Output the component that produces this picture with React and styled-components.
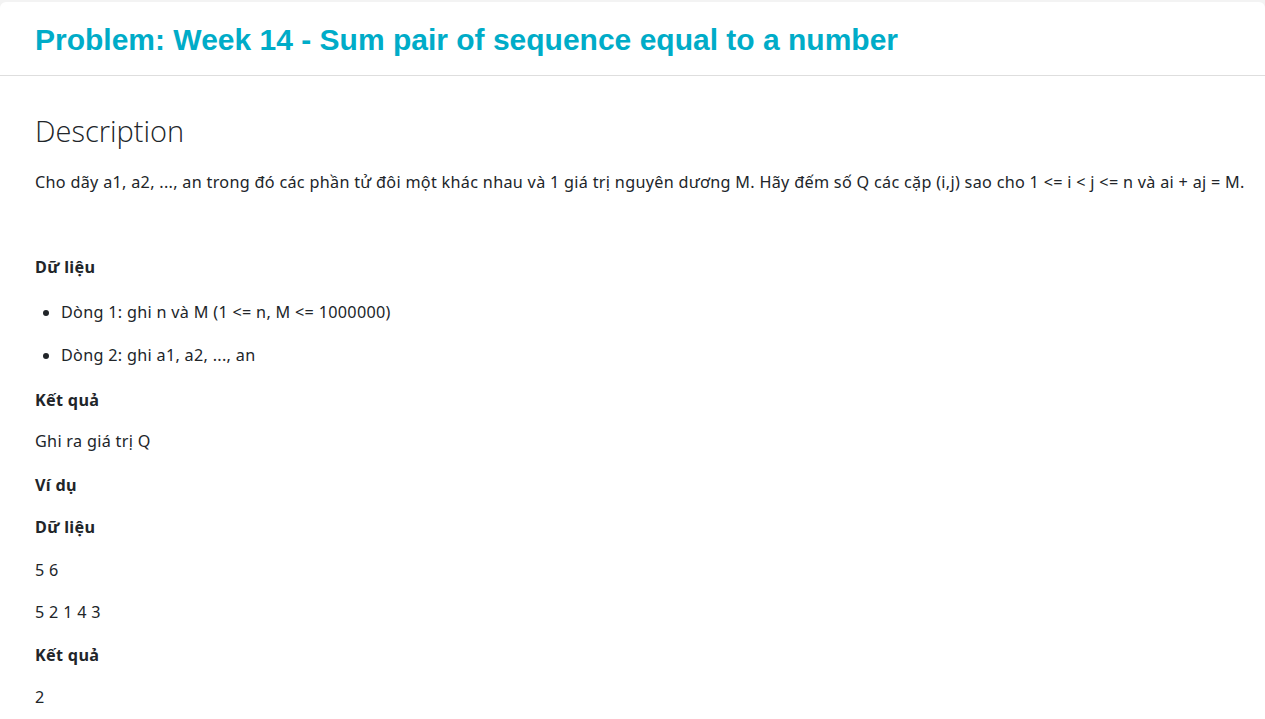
import React from "react";
import styled, { createGlobalStyle } from "styled-components";

const GlobalStyle = createGlobalStyle`
  html, body {
    margin: 0;
    padding: 0;
    background: #ffffff;
  }
  body {
    font-family: "Noto Sans", "Open Sans", sans-serif;
    color: #212529;
  }
`;

const Page = styled.div`
  background: #f3f3f3;
  padding-top: 2px;
  min-height: 100vh;
  box-sizing: border-box;
`;

const Card = styled.div`
  background: #fff;
  border-radius: 6px 6px 0 0;
  min-height: calc(100vh - 2px);
`;

const Header = styled.header`
  display: flex;
  align-items: center;
  height: 74px;
  padding: 2px 35px 0;
  box-sizing: border-box;
  border-bottom: 1px solid #dedede;
`;

const Title = styled.h1`
  margin: 0;
  font-family: "Liberation Sans", Arial, sans-serif;
  font-weight: bold;
  font-size: 30px;
  color: #00acc8;
`;

const Body = styled.main`
  padding: 37px 8px 0 35px;
`;

const Heading = styled.h2`
  margin: 0 0 20px;
  font-family: "Open Sans", "Noto Sans", sans-serif;
  font-weight: 300;
  font-size: 29px;
  line-height: 36px;
`;

const Para = styled.p`
  margin: 0 0 ${(p) => p.$gap || 16}px;
  font-size: 16.2px;
  letter-spacing: 0.3px;
  line-height: 26px;
  font-weight: ${(p) => (p.$bold ? 700 : 400)};
  color: #212529;
`;

const List = styled.ul`
  margin: 0 0 19px;
  padding-left: 26px;
`;

const Item = styled.li`
  font-size: 16.2px;
  letter-spacing: 0.3px;
  line-height: 26px;
  margin-bottom: 17px;
`;

export default function App() {
  return (
    <Page>
      <GlobalStyle />
      <Card>
        <Header>
          <Title>Problem: Week 14 - Sum pair of sequence equal to a number</Title>
        </Header>
        <Body>
          <Heading>Description</Heading>
          <Para $gap={59}>
            Cho dãy a1, a2, ..., an trong đó các phần tử đôi một khác nhau và 1 giá trị nguyên dương M. Hãy
            đếm số Q các cặp (i,j) sao cho 1 &lt;= i &lt; j &lt;= n và ai + aj = M.
          </Para>
          <Para $bold $gap={19}>Dữ liệu</Para>
          <List>
            <Item>Dòng 1: ghi n và M (1 &lt;= n, M &lt;= 1000000)</Item>
            <Item>Dòng 2: ghi a1, a2, ..., an</Item>
          </List>
          <Para $bold $gap={15}>Kết quả</Para>
          <Para $gap={18}>Ghi ra giá trị Q</Para>
          <Para $bold>Ví dụ</Para>
          <Para $bold $gap={17}>Dữ liệu</Para>
          <Para>5 6</Para>
          <Para $gap={17}>5 2 1 4 3</Para>
          <Para $bold>Kết quả</Para>
          <Para>2</Para>
        </Body>
      </Card>
    </Page>
  );
}
